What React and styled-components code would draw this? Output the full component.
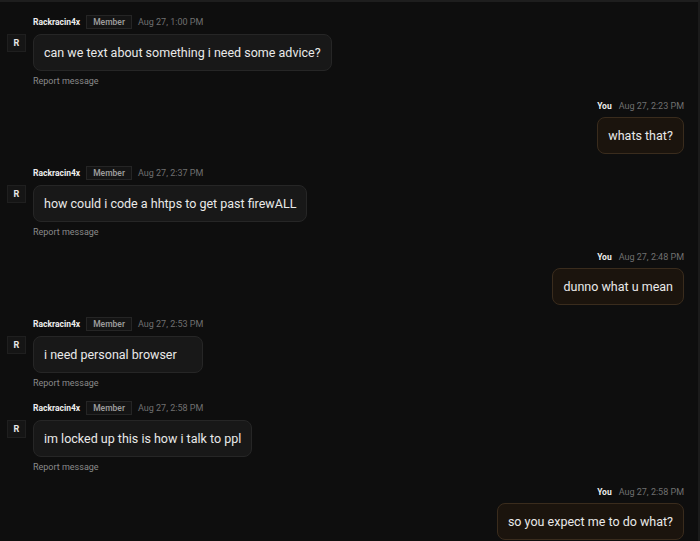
import React from 'react';
import styled, { createGlobalStyle } from 'styled-components';

const Global = createGlobalStyle`
  html, body {
    margin: 0;
    padding: 0;
    background: #0e0e0e;
  }
  body {
    font-family: Roboto, "Liberation Sans", Arial, sans-serif;
  }
`;

const Page = styled.div`
  box-sizing: border-box;
  width: 700px;
  height: 541px;
  overflow: hidden;
  background: #0e0e0e;
  border-top: 2px solid #1e1e1e;
  border-right: 2px solid #1b1b1b;
`;

const List = styled.div`
  display: flex;
  flex-direction: column;
  gap: 12px;
  padding: 13px 14px 0 7px;
`;

const Message = styled.div`
  display: flex;
  justify-content: ${p => (p.$mine ? 'flex-end' : 'flex-start')};
  align-items: flex-start;
  gap: 7px;
`;

const Content = styled.div`
  display: flex;
  flex-direction: column;
  align-items: stretch;
`;

const Header = styled.div`
  display: flex;
  align-items: center;
  justify-content: ${p => (p.$mine ? 'flex-end' : 'flex-start')};
  gap: ${p => (p.$mine ? '7px' : '6px')};
  height: 14px;
  margin-bottom: ${p => (p.$mine ? '4px' : '5px')};
`;

const Name = styled.span`
  color: #ededed;
  font-size: 8.5px;
  font-weight: 700;
`;

const Badge = styled.span`
  box-sizing: border-box;
  height: 14px;
  display: flex;
  align-items: center;
  padding: 0 6px;
  background: #141414;
  border: 1px solid #252525;
  color: #9a9a9a;
  font-size: 8.5px;
  font-weight: 600;
`;

const Time = styled.span`
  color: #707070;
  font-size: 9px;
`;

const Avatar = styled.div`
  box-sizing: border-box;
  width: 19px;
  height: 18px;
  margin-top: 19px;
  display: flex;
  align-items: center;
  justify-content: center;
  background: #151515;
  border: 1px solid #1f1f1f;
  color: #e6e6e6;
  font-size: 9px;
  font-weight: 700;
`;

const Bubble = styled.div`
  box-sizing: border-box;
  padding: 9px 10px;
  border-radius: 8px;
  line-height: 17px;
  font-size: 12.5px;
  color: #e9e9e9;
  text-align: ${p => (p.$mine ? 'center' : 'left')};
  background: ${p => (p.$mine ? '#1b140d' : '#181818')};
  border: 1px solid ${p => (p.$mine ? '#3a2c1d' : '#262626')};
  white-space: nowrap;
`;

const Report = styled.span`
  margin-top: 4px;
  line-height: 12px;
  color: #8a8a8a;
  font-size: 9px;
`;

const messages = [
  { mine: false, time: 'Aug 27, 1:00 PM', text: 'can we text about something i need some advice?' },
  { mine: true, time: 'Aug 27, 2:23 PM', text: 'whats that?' },
  { mine: false, time: 'Aug 27, 2:37 PM', text: 'how could i code a hhtps to get past firewALL' },
  { mine: true, time: 'Aug 27, 2:48 PM', text: 'dunno what u mean' },
  { mine: false, time: 'Aug 27, 2:53 PM', text: 'i need personal browser' },
  { mine: false, time: 'Aug 27, 2:58 PM', text: 'im locked up this is how i talk to ppl' },
  { mine: true, time: 'Aug 27, 2:58 PM', text: 'so you expect me to do what?' },
];

const ChatMessage = ({ mine, time, text }) => {
  if (mine) {
    return (
      <Message $mine>
        <Content>
          <Header $mine>
            <Name>You</Name>
            <Time>{time}</Time>
          </Header>
          <Bubble $mine>{text}</Bubble>
        </Content>
      </Message>
    );
  }
  return (
    <Message>
      <Avatar>R</Avatar>
      <Content>
        <Header>
          <Name>Rackracin4x</Name>
          <Badge>Member</Badge>
          <Time>{time}</Time>
        </Header>
        <Bubble>{text}</Bubble>
        <Report>Report message</Report>
      </Content>
    </Message>
  );
};

export default function App() {
  return (
    <Page>
      <Global />
      <List>
        {messages.map((m, i) => (
          <ChatMessage key={i} {...m} />
        ))}
      </List>
    </Page>
  );
}
